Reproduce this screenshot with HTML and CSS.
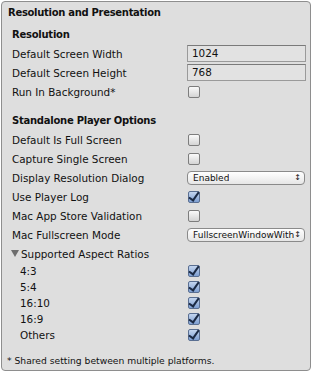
FILE: index.html
```html
<!DOCTYPE html>
<html>
<head>
<meta charset="utf-8">
<link rel="stylesheet" href="styles.css">
</head>
<body>
<div class="panel">
  <div class="panel-title">Resolution and Presentation</div>

  <div class="section-title first">Resolution</div>
  <div class="row"><span class="label">Default Screen Width</span><span class="field">1024</span></div>
  <div class="row"><span class="label">Default Screen Height</span><span class="field">768</span></div>
  <div class="row"><span class="label">Run In Background*</span><span class="check"></span></div>

  <div class="section-title">Standalone Player Options</div>
  <div class="row"><span class="label">Default Is Full Screen</span><span class="check"></span></div>
  <div class="row"><span class="label">Capture Single Screen</span><span class="check"></span></div>
  <div class="row"><span class="label">Display Resolution Dialog</span><span class="select"><span class="select-text">Enabled</span><span class="arrows">&#x2195;</span></span></div>
  <div class="row"><span class="label">Use Player Log</span><span class="check on"></span></div>
  <div class="row"><span class="label">Mac App Store Validation</span><span class="check"></span></div>
  <div class="row"><span class="label">Mac Fullscreen Mode</span><span class="select"><span class="select-text">FullscreenWindowWith</span><span class="arrows">&#x2195;</span></span></div>
  <div class="row foldout"><span class="label"><span class="tri"></span>Supported Aspect Ratios</span></div>
  <div class="sub"><span class="label">4:3</span><span class="check on"></span></div>
  <div class="sub"><span class="label">5:4</span><span class="check on"></span></div>
  <div class="sub"><span class="label">16:10</span><span class="check on"></span></div>
  <div class="sub"><span class="label">16:9</span><span class="check on"></span></div>
  <div class="sub"><span class="label">Others</span><span class="check on"></span></div>

  <div class="note">* Shared setting between multiple platforms.</div>
</div>
</body>
</html>
```
FILE: styles.css
```css
html, body {
  margin: 0;
  padding: 0;
  background: #ffffff;
}
body {
  width: 313px;
  height: 374px;
  font-family: "DejaVu Sans", "Liberation Sans", sans-serif;
  font-size: 10.4px;
  color: #111;
}
.panel {
  margin: 1px 2px 1px 1px;
  height: 370px;
  box-sizing: border-box;
  border: 1px solid #8e8e8e;
  border-radius: 4px;
  background: #dedede;
  padding: 1px 0 0 0;
  display: flex;
  flex-direction: column;
}
.panel-title {
  height: 19px;
  line-height: 19px;
  padding-left: 6px;
  font-weight: bold;
  font-size: 10px;
  letter-spacing: -0.3px;
}
.section-title {
  height: 19px;
  line-height: 19px;
  padding-left: 10px;
  font-weight: bold;
  font-size: 10px;
  letter-spacing: -0.25px;
  margin-top: 10px;
}
.section-title.first {
  margin-top: 3px;
}
.row, .sub {
  height: 19px;
  display: flex;
  align-items: center;
  padding-left: 10px;
}
.sub {
  height: 16px;
  padding-left: 18px;
}
.label {
  width: 175px;
  flex: none;
  white-space: nowrap;
  display: flex;
  align-items: center;
}
.sub .label {
  width: 167px;
}
.field {
  width: 119px;
  height: 17px;
  box-sizing: border-box;
  border: 1px solid #9a9a9a;
  border-top-color: #7a7a7a;
  background: #e2e2e2;
  line-height: 15px;
  padding-left: 4px;
}
.check {
  width: 12px;
  height: 12px;
  box-sizing: border-box;
  margin-left: 1px;
  border: 1px solid #7d7d7d;
  border-radius: 2px;
  background: linear-gradient(#fafafa, #d4d4d4);
  position: relative;
}
.check.on {
  border-color: #5a6f92;
  background: linear-gradient(#c3d5ef, #7e9fd2);
}
.check.on::after {
  content: "";
  position: absolute;
  left: 2px;
  top: -2px;
  width: 4px;
  height: 9px;
  border-right: 2px solid #1b2a44;
  border-bottom: 2px solid #1b2a44;
  transform: rotate(35deg);
}
.select {
  width: 118px;
  height: 14px;
  box-sizing: border-box;
  border: 1px solid #8a8a8a;
  border-radius: 4px;
  background: linear-gradient(#ffffff, #e6e6e6);
  display: flex;
  align-items: center;
  justify-content: space-between;
  padding: 0 3px 0 5px;
  font-size: 9px;
  overflow: hidden;
}
.select-text {
  white-space: nowrap;
  overflow: hidden;
}
.arrows {
  font-size: 8px;
  flex: none;
}
.tri {
  width: 0;
  height: 0;
  border-left: 4px solid transparent;
  border-right: 4px solid transparent;
  border-top: 7px solid #6e6e6e;
  margin-right: 2px;
  margin-left: -1px;
}
.note {
  margin-top: auto;
  margin-bottom: 2px;
  padding-left: 5px;
  font-size: 9.2px;
  height: 14px;
  line-height: 14px;
}
```
